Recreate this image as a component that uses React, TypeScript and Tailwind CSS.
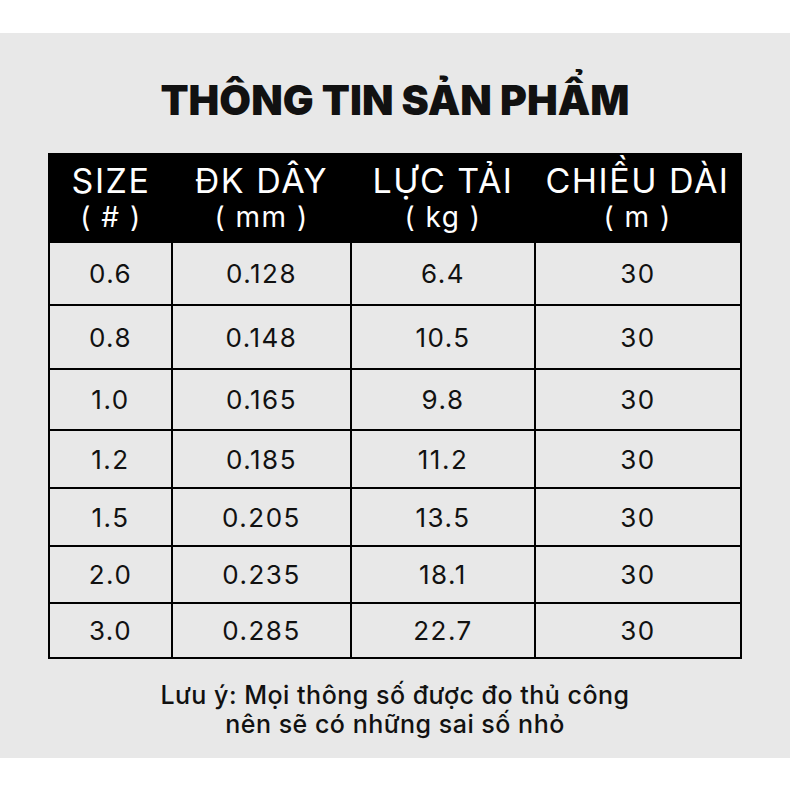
import React from 'react';

const rows = [
  ['0.6', '0.128', '6.4', '30'],
  ['0.8', '0.148', '10.5', '30'],
  ['1.0', '0.165', '9.8', '30'],
  ['1.2', '0.185', '11.2', '30'],
  ['1.5', '0.205', '13.5', '30'],
  ['2.0', '0.235', '18.1', '30'],
  ['3.0', '0.285', '22.7', '30'],
];

const rowHeights = ['h-[63px]', 'h-[64px]', 'h-[61px]', 'h-[58px]', 'h-[58px]', 'h-[57px]', 'h-[55px]'];

const headers = [
  ['SIZE', '( # )'],
  ['ĐK DÂY', '( mm )'],
  ['LỰC TẢI', '( kg )'],
  ['CHIỀU DÀI', '( m )'],
];

export default function App() {
  return (
    <div className="w-[790px] h-[790px] bg-white pt-[33px] font-['Inter',sans-serif]">
      <div className="h-[725px] bg-[#e8e8e8] flex flex-col items-center">
        <h1 className="mt-[39px] text-[41px] leading-[56px] font-black text-[#111] tracking-[0px]">
          THÔNG TIN SẢN PHẨM
        </h1>

        <table className="mt-[25px] w-[692px] border-collapse border-2 border-black table-fixed">
          <colgroup>
            <col className="w-[123px]" />
            <col className="w-[179px]" />
            <col className="w-[184px]" />
            <col className="w-[206px]" />
          </colgroup>
          <thead>
            <tr className="h-[88px] bg-black text-white">
              {headers.map(([a, b]) => (
                <th key={a} className="font-normal text-[34px] leading-[36px] tracking-[1.5px] pt-[1px]">
                  <div>{a}</div>
                  <div className="text-[28px]">{b}</div>
                </th>
              ))}
            </tr>
          </thead>
          <tbody>
            {rows.map((r, i) => (
              <tr key={i} className={rowHeights[i]}>
                {r.map((c, j) => (
                  <td key={j} className="border-2 border-black text-center text-[26px] tracking-[1.5px] text-[#111]">
                    {c}
                  </td>
                ))}
              </tr>
            ))}
          </tbody>
        </table>

        <p className="mt-[22px] text-center text-[25px] leading-[29px] font-medium tracking-[0.5px] text-[#111]">
          Lưu ý: Mọi thông số được đo thủ công
          <br />
          nên sẽ có những sai số nhỏ
        </p>
      </div>
    </div>
  );
}
